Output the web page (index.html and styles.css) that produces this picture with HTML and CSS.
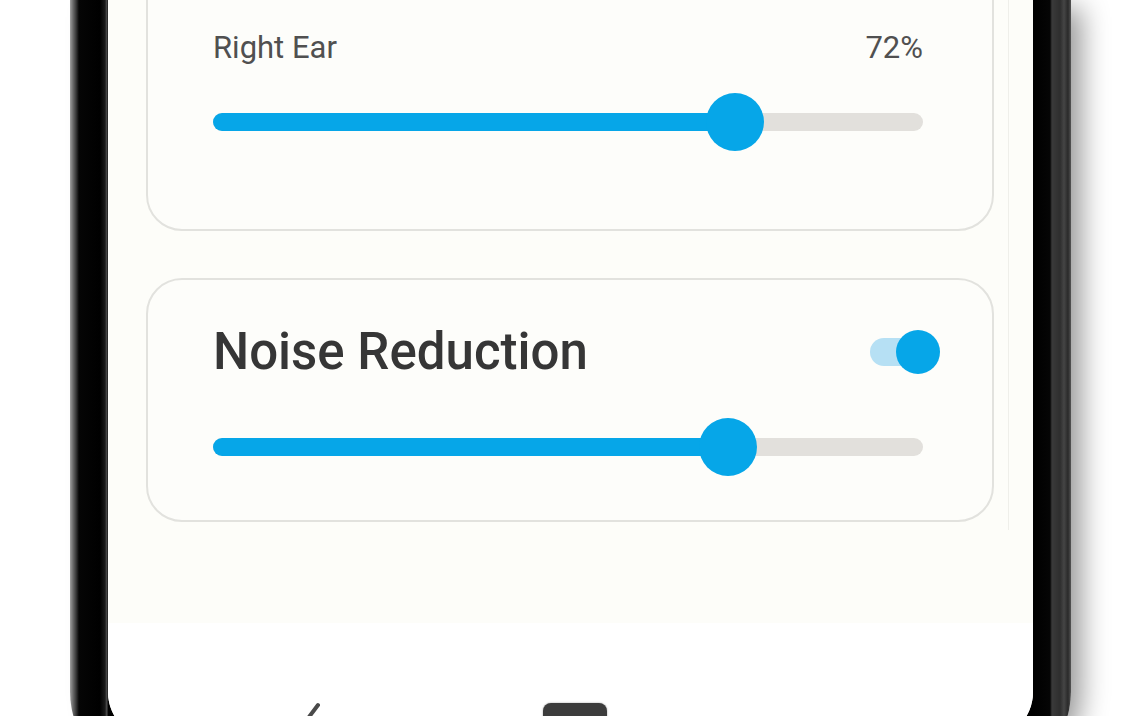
FILE: index.html
```html
<!DOCTYPE html>
<html lang="en">
<head>
<meta charset="utf-8">
<title>Hearing Settings</title>
<link rel="stylesheet" href="styles.css">
</head>
<body>
<div class="stage">
  <div class="phone">
    <div class="screen">
      <div class="content">
        <div class="list">
          <section class="card card-volume">
            <div class="label-row">
              <span class="label">Right Ear</span>
              <span class="value">72%</span>
            </div>
            <div class="slider">
              <div class="track">
                <div class="fill" style="width: 73.5%"><span class="thumb"></span></div>
              </div>
            </div>
          </section>
          <section class="card card-noise">
            <div class="title-row">
              <h2 class="title">Noise Reduction</h2>
              <div class="switch"><span class="switch-track"></span><span class="switch-thumb"></span></div>
            </div>
            <div class="slider">
              <div class="track">
                <div class="fill" style="width: 72.5%"><span class="thumb"></span></div>
              </div>
            </div>
          </section>
        </div>
      </div>
      <nav class="navbar">
        <span class="nav-item nav-back">
          <svg width="34" height="44" viewBox="0 0 34 44"><path d="M24 4 L9 24 L24 44" fill="none" stroke="#4a4a4a" stroke-width="4" stroke-linecap="round" stroke-linejoin="round"/></svg>
        </span>
        <span class="nav-item nav-home"></span>
        <span class="nav-item nav-recent"></span>
      </nav>
    </div>
  </div>
</div>
</body>
</html>
```
FILE: styles.css
```css
html, body {
  margin: 0;
  padding: 0;
  background: #ffffff;
}
body {
  width: 1146px;
  height: 716px;
  overflow: hidden;
  font-family: Roboto, "Liberation Sans", sans-serif;
}
.stage {
  width: 1146px;
  height: 716px;
  overflow: hidden;
  background: #ffffff;
}
.phone {
  margin-left: 70px;
  width: 1001px;
  height: 778px;
  box-sizing: border-box;
  padding: 0 38px 38px 38px;
  border-radius: 0 0 86px 86px;
  background: linear-gradient(90deg,
    #a0a0a0 0px, #6a6a6a 3px, #3a3a3a 6px, #050505 9px,
    #000 30px, #1a1a1a 35px, #555 37px, #000 38px,
    #000 963px, #050505 980px, #3a3a3a 982px, #2e2e2e 990px,
    #454545 994px, #2a2a2a 998px, #555 1001px);
  box-shadow: 18px 0 28px -8px rgba(0, 0, 0, 0.42);
}
.screen {
  width: 925px;
  height: 740px;
  border-radius: 0 0 48px 48px;
  overflow: hidden;
  background: #fdfdfa;
  display: flex;
  flex-direction: column;
}
.content {
  height: 623px;
  flex: none;
  background: #fdfdf9;
  overflow: hidden;
}
.list {
  width: 901px;
  box-sizing: border-box;
  padding: 0 14px 8px 38px;
  border-right: 1px solid #efefea;
  margin-top: -50px;
}
.card {
  width: 848px;
  box-sizing: border-box;
  border: 2px solid #e2e2de;
  border-radius: 36px;
  background: #fdfdfa;
  padding-left: 65px;
  padding-right: 69px;
}
.card-volume {
  padding-top: 78px;
  padding-bottom: 78px;
}
.card-noise {
  margin-top: 47px;
  padding-top: 42px;
  padding-bottom: 44px;
}
.label-row {
  display: flex;
  justify-content: space-between;
  align-items: center;
  height: 36px;
  font-size: 31px;
  line-height: 36px;
  color: #505050;
  margin-bottom: 27px;
}
.title-row {
  display: flex;
  justify-content: space-between;
  align-items: center;
  height: 60px;
  margin-bottom: 36px;
}
.title {
  margin: 0;
  font-size: 51px;
  line-height: 60px;
  font-weight: 500;
  color: #363636;
}
.slider {
  height: 58px;
  display: flex;
  align-items: center;
}
.track {
  width: 100%;
  height: 18px;
  border-radius: 9px;
  background: #e2e0dc;
}
.fill {
  position: relative;
  height: 100%;
  border-radius: 9px;
  background: #06a6e8;
}
.thumb {
  position: absolute;
  right: -29px;
  top: -20px;
  width: 58px;
  height: 58px;
  border-radius: 50%;
  background: #06a6e8;
}
.switch {
  position: relative;
  width: 70px;
  height: 44px;
  margin-right: -17px;
}
.switch-track {
  position: absolute;
  left: 0;
  top: 8px;
  width: 60px;
  height: 28px;
  border-radius: 14px;
  background: #b6e0f4;
}
.switch-thumb {
  position: absolute;
  right: 0;
  top: 0;
  width: 44px;
  height: 44px;
  border-radius: 50%;
  background: #06a6e8;
}
.navbar {
  flex: 1;
  background: #ffffff;
  display: flex;
  justify-content: flex-start;
  align-items: flex-start;
  padding-top: 78px;
  padding-left: 186px;
}
.nav-item {
  display: block;
}
.nav-back {
  width: 34px;
  height: 44px;
  margin-right: 215px;
}
.nav-home {
  margin-top: 2px;
  width: 64px;
  height: 30px;
  border-radius: 8px;
  background: #3c3c3c;
  box-shadow: 0 0 2px rgba(0,0,0,0.4);
}
.nav-recent {
  width: 34px;
  margin-left: 233px;
}
```
